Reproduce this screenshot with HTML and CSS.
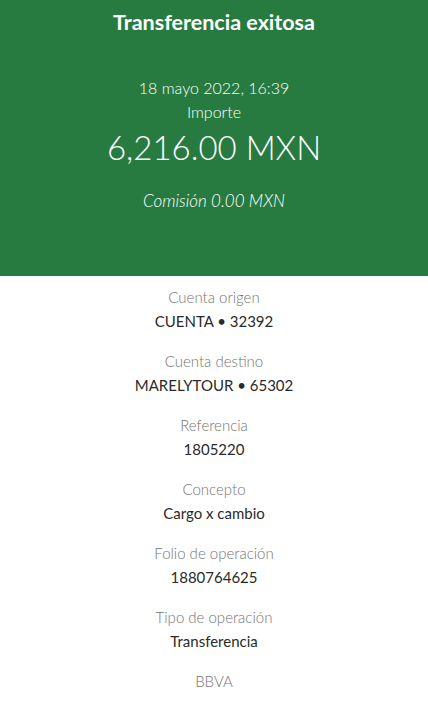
FILE: index.html
```html
<!DOCTYPE html>
<html lang="es">
<head>
<meta charset="utf-8">
<link rel="stylesheet" href="styles.css">
</head>
<body>
<header class="hero">
  <h1 class="title">Transferencia exitosa</h1>
  <div class="date">18 mayo 2022, 16:39</div>
  <div class="label-light">Importe</div>
  <div class="amount">6,216.00 MXN</div>
  <div class="fee">Comisión 0.00 MXN</div>
</header>
<main class="details">
  <div class="item"><div class="k">Cuenta origen</div><div class="v">CUENTA • 32392</div></div>
  <div class="item"><div class="k">Cuenta destino</div><div class="v">MARELYTOUR • 65302</div></div>
  <div class="item"><div class="k">Referencia</div><div class="v">1805220</div></div>
  <div class="item"><div class="k">Concepto</div><div class="v">Cargo x cambio</div></div>
  <div class="item"><div class="k">Folio de operación</div><div class="v">1880764625</div></div>
  <div class="item"><div class="k">Tipo de operación</div><div class="v">Transferencia</div></div>
  <div class="item"><div class="k">BBVA</div></div>
</main>
</body>
</html>
```
FILE: styles.css
```css
html, body { margin: 0; padding: 0; }
body {
  font-family: Lato, "Open Sans", sans-serif;
  background: #fff;
  width: 428px;
  height: 701px;
  overflow: hidden;
}
.hero {
  background: #277b41;
  color: #fff;
  height: 276px;
  display: flex;
  flex-direction: column;
  align-items: center;
  box-sizing: border-box;
  padding-top: 8px;
}
.title {
  margin: 0;
  font-size: 21.5px;
  font-weight: 700;
  line-height: 28px;
}
.date {
  margin-top: 40px;
  font-size: 16px;
  font-weight: 300;
  line-height: 24px;
}
.label-light {
  font-size: 16px;
  font-weight: 300;
  line-height: 24px;
}
.amount {
  font-size: 33px;
  font-weight: 300;
  line-height: 46px;
}
.fee {
  margin-top: 19px;
  font-size: 17px;
  font-style: italic;
  font-weight: 300;
  line-height: 24px;
}
.details {
  display: flex;
  flex-direction: column;
  align-items: center;
  padding-top: 9px;
  gap: 16px;
}
.item {
  display: flex;
  flex-direction: column;
  align-items: center;
}
.k {
  font-size: 15px;
  color: #747474;
  line-height: 24px;
  font-weight: 300;
}
.v {
  font-size: 15px;
  color: #2a2a2a;
  line-height: 24px;
}
```
